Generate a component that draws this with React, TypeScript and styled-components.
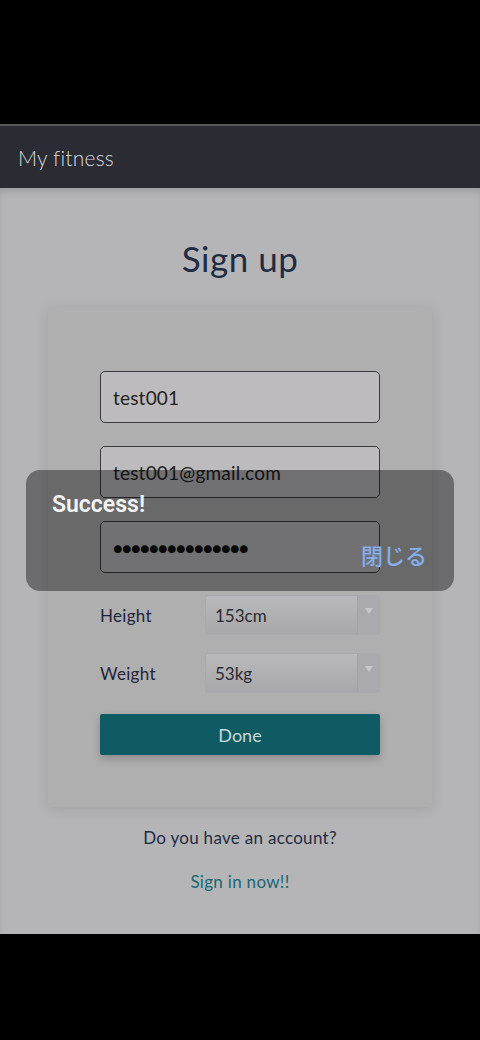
import React from "react";
import styled, { createGlobalStyle } from "styled-components";

const Global = createGlobalStyle`
  html, body { margin: 0; padding: 0; background: #000; }
  body { font-family: Lato, "Open Sans", sans-serif; }
  * { box-sizing: border-box; }
`;

const Screen = styled.div`
  width: 480px;
  height: 1040px;
  background: #000;
  display: flex;
  flex-direction: column;
  position: relative;
`;

const TopSpace = styled.div`
  height: 124px;
  background: #000;
`;

const Header = styled.header`
  height: 64px;
  background: #2a2b33;
  border-top: 2px solid #58585c;
  display: flex;
  align-items: center;
  padding-left: 18px;
  color: #dcdce0;
  font-size: 21px;
  font-weight: 300;
  letter-spacing: 0.2px;
`;

const Main = styled.main`
  height: 746px;
  background: #b5b5b8;
  display: flex;
  flex-direction: column;
  align-items: center;
  padding-top: 53px;
  box-shadow: inset 0 6px 8px -4px rgba(0, 0, 0, 0.18);
`;

const Title = styled.h1`
  margin: 0;
  font-size: 35px;
  font-weight: 400;
  color: #1f2c42;
  line-height: 1;
  height: 66px;
  letter-spacing: 0.5px;
`;

const Card = styled.section`
  width: 384px;
  background: #b0afb0;
  box-shadow: 0 2px 14px rgba(0, 0, 0, 0.12);
  border-radius: 2px;
  padding: 64px 52px 52px;
  display: flex;
  flex-direction: column;
`;

const Input = styled.div<{ $dots?: boolean }>`
  height: 52px;
  border: 1px solid #3a3a3e;
  border-radius: 5px;
  background: #bdbbbe;
  display: flex;
  align-items: center;
  padding-left: 12px;
  font-size: ${(p) => (p.$dots ? "16px" : "19px")};
  letter-spacing: ${(p) => (p.$dots ? "-0.6px" : "0.2px")};
  color: ${(p) => (p.$dots ? "#111" : "#222")};
  margin-bottom: 23px;
  &:nth-of-type(3) { margin-bottom: 22px; }
`;

const Row = styled.div<{ $mb: number }>`
  display: flex;
  align-items: center;
  height: 40px;
  margin-bottom: ${(p) => p.$mb}px;
`;

const Label = styled.span`
  width: 105px;
  font-size: 17px;
  color: #1f2438;
  letter-spacing: 0.3px;
`;

const Select = styled.div`
  flex: 1;
  height: 40px;
  border-radius: 3px;
  border: 1px solid #a9a9ad;
  background: linear-gradient(#b9b8bb, #a8a8ab);
  display: flex;
  align-items: stretch;
  overflow: hidden;
`;

const SelectValue = styled.span`
  flex: 1;
  display: flex;
  align-items: center;
  padding-left: 9px;
  font-size: 17px;
  color: #2a2a2e;
`;

const Arrow = styled.span`
  width: 22px;
  border-left: 1px solid #a3a3a7;
  background: #a9a9ae;
  display: flex;
  align-items: flex-start;
  justify-content: center;
  padding-top: 12px;
  &::after {
    content: "";
    border-left: 4px solid transparent;
    border-right: 4px solid transparent;
    border-top: 6px solid #c8c8cc;
  }
`;

const Done = styled.button`
  height: 41px;
  margin-top: 1px;
  border: none;
  border-radius: 2px;
  background: #0e5b63;
  color: #c9d8da;
  font-family: inherit;
  font-size: 18px;
  box-shadow: 0 4px 8px rgba(0, 0, 0, 0.2);
`;

const Question = styled.p`
  margin: 20px 0 0;
  font-size: 17px;
  color: #1f2a42;
  letter-spacing: 0.3px;
`;

const SignIn = styled.a`
  margin-top: 23px;
  font-size: 17px;
  color: #156870;
  letter-spacing: 0.3px;
`;

const Toast = styled.div`
  position: absolute;
  left: 26px;
  top: 470px;
  width: 428px;
  height: 121px;
  border-radius: 14px;
  background: rgba(0, 0, 0, 0.4);
  padding: 21px 27px 0 26px;
  display: flex;
  flex-direction: column;
  font-family: Roboto, "Noto Sans CJK JP", sans-serif;
`;

const ToastTitle = styled.div`
  color: #f4f4f6;
  font-size: 23px;
  font-weight: 600;
`;

const Close = styled.div`
  align-self: flex-end;
  margin-top: 20px;
  color: #86aeec;
  font-size: 22px;
  font-family: "Noto Sans CJK JP", sans-serif;
  font-weight: 500;
`;

const BottomSpace = styled.div`
  flex: 1;
  background: #000;
`;

export default function App() {
  return (
    <>
      <Global />
      <Screen>
        <TopSpace />
        <Header>My fitness</Header>
        <Main>
          <Title>Sign up</Title>
          <Card>
            <Input>test001</Input>
            <Input>test001@gmail.com</Input>
            <Input $dots>●●●●●●●●●●●●●●●</Input>
            <Row $mb={18}>
              <Label>Height</Label>
              <Select>
                <SelectValue>153cm</SelectValue>
                <Arrow />
              </Select>
            </Row>
            <Row $mb={20}>
              <Label>Weight</Label>
              <Select>
                <SelectValue>53kg</SelectValue>
                <Arrow />
              </Select>
            </Row>
            <Done>Done</Done>
          </Card>
          <Question>Do you have an account?</Question>
          <SignIn>Sign in now!!</SignIn>
        </Main>
        <BottomSpace />
        <Toast>
          <ToastTitle>Success!</ToastTitle>
          <Close>閉じる</Close>
        </Toast>
      </Screen>
    </>
  );
}
